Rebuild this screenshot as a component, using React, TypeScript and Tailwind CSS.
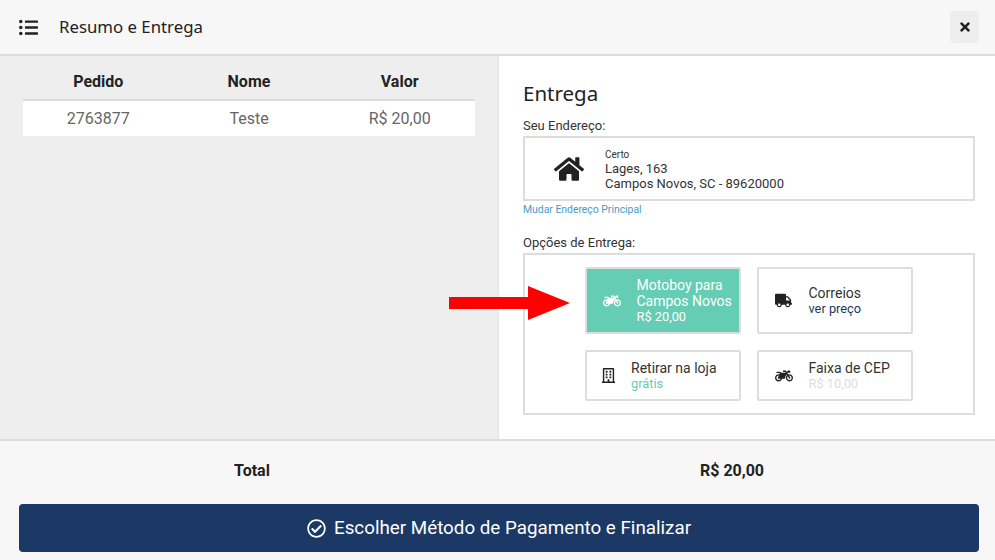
import { FaHome, FaTimes, FaListUl, FaMotorcycle, FaTruck, FaRegBuilding, FaRegCheckCircle } from "react-icons/fa";

function Option({ icon, title, sub, subClass, active, heightClass, iconGap }: { icon: React.ReactNode; title: React.ReactNode; sub: string; subClass: string; active?: boolean; heightClass: string; iconGap: string }) {
  return (
    <div className={`flex w-[156px] items-center border-2 border-[#ddd] rounded-[2px] ${heightClass} ${active ? "bg-[#64cdb4] text-white" : "bg-white text-[#333]"}`}>
      <div className={`flex justify-center shrink-0 ${iconGap}`}>{icon}</div>
      <div className="text-[14px] leading-[16px]">
        <div>{title}</div>
        <div className={`text-[12.8px] ${subClass}`}>{sub}</div>
      </div>
    </div>
  );
}

export default function App() {
  return (
    <div className="relative flex h-[560px] w-[995px] flex-col overflow-hidden bg-[#f7f7f7] font-['Roboto',sans-serif] text-[#222]">
      <header className="flex h-[56px] shrink-0 items-center border-b-2 border-[#ddd] pl-[19px] pr-[16px]">
        <FaListUl className="text-[19px] text-[#222]" />
        <h1 className="ml-[21px] flex-1 font-['Noto_Sans',sans-serif] text-[16.8px] text-[#222]">Resumo e Entrega</h1>
        <button className="flex h-[32px] w-[29px] items-center justify-center rounded-[4px] bg-[#eee] text-[#222]">
          <FaTimes className="text-[14px]" />
        </button>
      </header>

      <main className="flex h-[385px] shrink-0 border-b-2 border-[#ddd]">
        <section className="w-[498px] shrink-0 bg-[#eee] pl-[23px] pr-[23px]">
          <div className="grid h-[45px] grid-cols-3 items-center border-b-2 border-[#ddd] pt-[8px] text-center text-[16px] font-bold text-[#222]">
            <div>Pedido</div>
            <div>Nome</div>
            <div>Valor</div>
          </div>
          <div className="grid h-[35px] grid-cols-3 items-center bg-white text-center text-[16px] text-[#666]">
            <div>2763877</div>
            <div>Teste</div>
            <div>R$ 20,00</div>
          </div>
        </section>

        <section className="flex-1 border-l border-[#e5e5e5] bg-white pl-[24px] pr-[20px]">
          <h2 className="mt-[22px] font-['Noto_Sans',sans-serif] text-[20.5px] leading-[30px] text-[#222]">Entrega</h2>
          <div className="mt-[10px] text-[13px] leading-[16px] text-[#333]">Seu Endereço:</div>
          <div className="mt-[2px] flex h-[65px] items-center border-2 border-[#ddd] pl-[29px]">
            <FaHome className="text-[30px] text-[#222]" />
            <div className="ml-[21px] text-[13px] leading-[15px] text-[#333]">
              <div className="-mb-[2px] text-[10px] leading-[17px]">Certo</div>
              <div>Lages, 163</div>
              <div>Campos Novos, SC - 89620000</div>
            </div>
          </div>
          <div className="mt-[1px] text-[10.4px] leading-[16px] text-[#4a9ac7]">Mudar Endereço Principal</div>
          <div className="mt-[17px] text-[13px] leading-[16px] text-[#333]">Opções de Entrega:</div>
          <div className="mt-[2px] flex h-[162px] flex-col items-center gap-[16px] border-2 border-[#ddd] pt-[12px]">
            <div className="flex gap-[16px]">
              <Option active heightClass="h-[67px]" iconGap="w-[49.5px]" icon={<FaMotorcycle className="text-[18px] text-white" />} title={<>Motoboy para<br />Campos Novos</>} sub="R$ 20,00" subClass="text-white" />
              <Option heightClass="h-[67px]" iconGap="w-[49.5px]" icon={<FaTruck className="text-[17px] text-[#222]" />} title="Correios" sub="ver preço" subClass="text-[#1c3966]" />
            </div>
            <div className="flex gap-[16px]">
              <Option heightClass="h-[51px]" iconGap="w-[44px] pr-[1px]" icon={<FaRegBuilding className="text-[15px] text-[#222]" />} title="Retirar na loja" sub="grátis" subClass="text-[#64cdb4]" />
              <Option heightClass="h-[51px]" iconGap="w-[49.5px]" icon={<FaMotorcycle className="text-[18px] text-[#222]" />} title="Faixa de CEP" sub="R$ 10,00" subClass="text-[#ddd]" />
            </div>
          </div>
        </section>
      </main>

      <footer className="flex flex-1 flex-col pl-[19px] pr-[16px]">
        <div className="mt-[20px] grid grid-cols-2 text-center text-[16px] font-bold leading-[19px] text-[#222]">
          <div className="pr-[14px]">Total</div>
          <div className="pr-[14px]">R$ 20,00</div>
        </div>
        <button className="mt-[24px] flex h-[48px] items-center justify-center gap-[8px] rounded-[4px] bg-[#1c3966] text-[18.8px] text-white">
          <FaRegCheckCircle className="text-[19px]" />
          Escolher Método de Pagamento e Finalizar
        </button>
      </footer>

      <svg className="absolute left-[449px] top-[286px]" width="121" height="34" viewBox="0 0 121 34">
        <path d="M0 11H79V0L121 17L79 34V23H0Z" fill="#ff0000" />
      </svg>
    </div>
  );
}
